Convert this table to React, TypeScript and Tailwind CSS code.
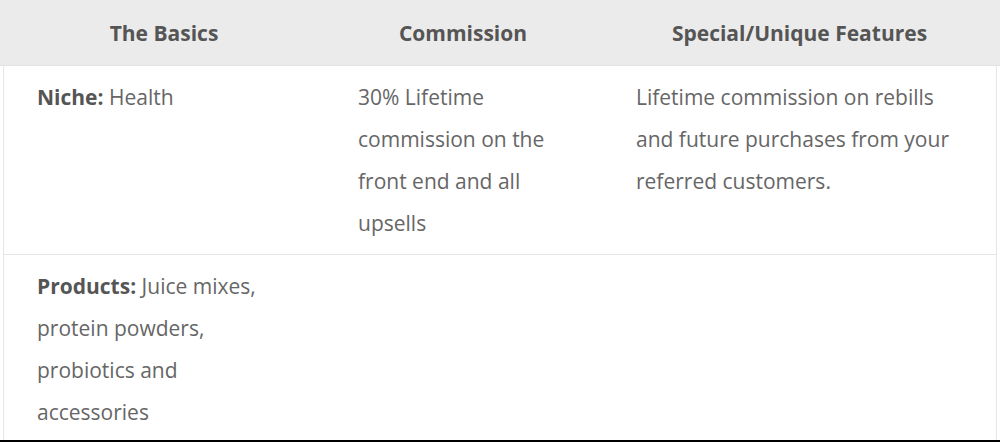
const font = { fontFamily: '"Open Sans", "Liberation Sans", sans-serif' }

const rows = [
  {
    basics: (
      <>
        <b className="font-bold text-[#555]">Niche:</b> Health
      </>
    ),
    commission: '30% Lifetime commission on the front end and all upsells',
    features: 'Lifetime commission on rebills and future purchases from your referred customers.',
  },
  {
    basics: (
      <>
        <b className="font-bold text-[#555]">Products:</b> Juice mixes, protein powders, probiotics and accessories
      </>
    ),
    commission: '',
    features: '',
  },
]

export default function App() {
  return (
    <div className="w-[1000px] h-[442px] overflow-hidden bg-white" style={font}>
      <div className="h-[440px] overflow-hidden flex flex-col">
        <div className="grid grid-cols-[324px_278px_398px] h-[66px] shrink-0 pt-[2px] bg-[#ebebeb] border-b border-[#e2e2e2] items-center text-center text-[21px] font-bold text-[#555]">
          <div className="pl-[4px]">The Basics</div>
          <div>Commission</div>
          <div className="pr-[3px]">Special/Unique Features</div>
        </div>
        <div className="flex-1 mx-[3px] border-x border-[#e6e6e6]">
          {rows.map((r, i) => (
            <div
              key={i}
              className="grid grid-cols-[321px_278px_394px] border-b border-[#e6e6e6] last:border-b-0 text-[21px] leading-[42px] text-[#666]"
            >
              <div className="px-[33px] py-[10px]">{r.basics}</div>
              <div className="px-[33px] py-[10px]">{r.commission}</div>
              <div className="px-[33px] py-[10px]">{r.features}</div>
            </div>
          ))}
        </div>
      </div>
      <div className="h-[2px] bg-black" />
    </div>
  )
}
